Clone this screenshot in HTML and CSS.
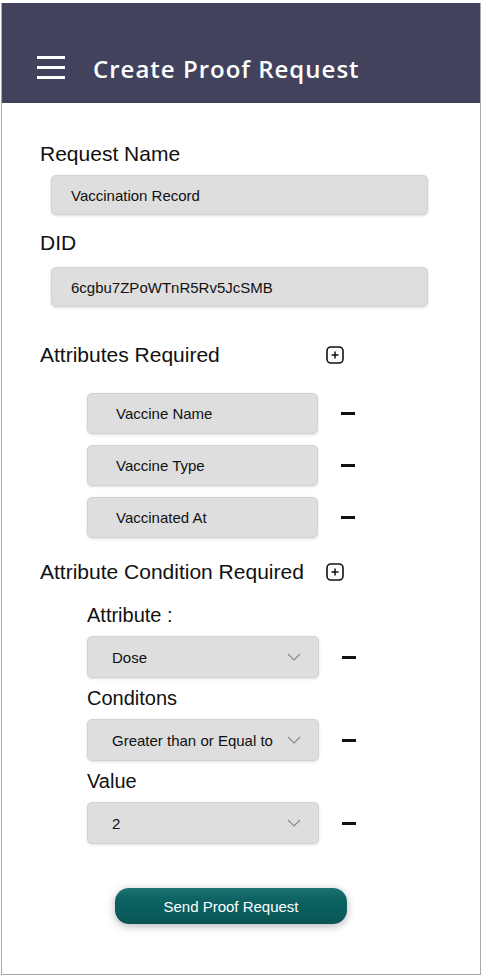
FILE: index.html
```html
<!DOCTYPE html>
<html lang="en">
<head>
    <meta charset="UTF-8">
    <meta name="viewport" content="width=device-width, initial-scale=1.0">
    <title>Create Proof Request</title>
    <link rel="stylesheet" href="styles.css">
</head>
<body>

    <div class="frame">
        <header class="topbar">
            <svg class="menu" width="28" height="24" viewBox="0 0 28 24">
                <rect x="0" y="0" width="28" height="3" fill="#fff"/>
                <rect x="0" y="10" width="28" height="3" fill="#fff"/>
                <rect x="0" y="20" width="28" height="3" fill="#fff"/>
            </svg>
            <h1>Create Proof Request</h1>
        </header>

        <main class="form">
            <div class="label label-name">Request Name</div>
            <div class="field field-wide">Vaccination Record</div>

            <div class="label label-did">DID</div>
            <div class="field field-wide">6cgbu7ZPoWTnR5Rv5JcSMB</div>

            <!-- attributes -->
            <div class="section-head head-attrs">
                <span class="label">Attributes Required</span>
                <svg class="add" width="18" height="18" viewBox="0 0 18 18">
                    <rect x="1" y="1" width="16" height="16" rx="4" fill="none" stroke="#111" stroke-width="1.6"/>
                    <path d="M9 5.5v7M5.5 9h7" stroke="#111" stroke-width="1.5"/>
                </svg>
            </div>
            <div class="rows">
                <div class="row">
                    <div class="field field-attr">Vaccine Name</div>
                    <span class="remove"></span>
                </div>
                <div class="row">
                    <div class="field field-attr">Vaccine Type</div>
                    <span class="remove"></span>
                </div>
                <div class="row">
                    <div class="field field-attr">Vaccinated At</div>
                    <span class="remove"></span>
                </div>
            </div>

            <!-- conditions -->
            <div class="section-head head-cond">
                <span class="label">Attribute Condition Required</span>
                <svg class="add" width="18" height="18" viewBox="0 0 18 18">
                    <rect x="1" y="1" width="16" height="16" rx="4" fill="none" stroke="#111" stroke-width="1.6"/>
                    <path d="M9 5.5v7M5.5 9h7" stroke="#111" stroke-width="1.5"/>
                </svg>
            </div>
            <div class="cond">
                <div class="sublabel">Attribute :</div>
                <div class="row">
                    <div class="field field-select"><span>Dose</span><svg class="chev" width="14" height="8" viewBox="0 0 14 8"><path d="M1 1l6 6 6-6" fill="none" stroke="#8a8a8a" stroke-width="1.2"/></svg></div>
                    <span class="remove"></span>
                </div>
                <div class="sublabel">Conditons</div>
                <div class="row">
                    <div class="field field-select"><span>Greater than or Equal to</span><svg class="chev" width="14" height="8" viewBox="0 0 14 8"><path d="M1 1l6 6 6-6" fill="none" stroke="#8a8a8a" stroke-width="1.2"/></svg></div>
                    <span class="remove"></span>
                </div>
                <div class="sublabel">Value</div>
                <div class="row">
                    <div class="field field-select"><span>2</span><svg class="chev" width="14" height="8" viewBox="0 0 14 8"><path d="M1 1l6 6 6-6" fill="none" stroke="#8a8a8a" stroke-width="1.2"/></svg></div>
                    <span class="remove"></span>
                </div>
            </div>

            <button class="send">Send Proof Request</button>
        </main>
    </div>

</body>
</html>
```

FILE: styles.css
```css
body {
    margin: 0;
    font-family: "Liberation Sans", Arial, sans-serif;
    color: #111;
    background: #fff;
}
.frame {
    margin: 3px 0 0 1px;
    width: 480px;
    height: 972px;
    box-sizing: border-box;
    border: 1px solid #a8a8a8;
    border-top: none;
}
.topbar {
    height: 100px;
    background-color: #43425d;
    display: flex;
    align-items: center;
    padding-left: 35px;
    padding-top: 30px;
    box-sizing: border-box;
}
.menu {
    display: block;
}
.topbar h1 {
    margin: 0 0 0 28px;
    font-family: "Open Sans", sans-serif;
    font-weight: 600;
    font-size: 24px;
    letter-spacing: 1px;
    color: #fff;
}
.form {
    padding: 39px 0 0 38px;
}
.label {
    font-size: 21px;
    line-height: 24px;
}
.label-did {
    margin-top: 16px;
}
.field {
    background-color: #dedede;
    border: 1px solid #d2d2d2;
    border-radius: 5px;
    box-shadow: 0 1px 3px rgba(0, 0, 0, 0.12);
    box-sizing: border-box;
    font-size: 15px;
    display: flex;
    align-items: center;
}
.field-wide {
    margin: 9px 0 0 11px;
    width: 377px;
    height: 40px;
    padding-left: 19px;
}
.label-did + .field-wide {
    margin-top: 12px;
}
.section-head {
    width: 304px;
    display: flex;
    justify-content: space-between;
    align-items: center;
}
.head-attrs {
    margin-top: 36px;
}
.head-cond {
    margin-top: 22px;
}
.add {
    display: block;
}
.rows {
    margin: 26px 0 0 47px;
    display: flex;
    flex-direction: column;
    gap: 11px;
}
.row {
    display: flex;
    align-items: center;
}
.field-attr {
    width: 231px;
    height: 41px;
    padding-left: 28px;
}
.remove {
    width: 14px;
    height: 3px;
    background: #111;
    margin-left: 23px;
}
.cond {
    margin: 19px 0 0 47px;
}
.sublabel {
    font-size: 20px;
    line-height: 24px;
    margin-bottom: 9px;
}
.row + .sublabel {
    margin-top: 8px;
}
.field-select {
    width: 232px;
    height: 42px;
    padding: 0 17px 0 24px;
    justify-content: space-between;
}
.send {
    display: block;
    margin: 44px 0 0 75px;
    width: 232px;
    height: 36px;
    border: none;
    border-radius: 14px;
    background: linear-gradient(#1f7272, #0d6262 30%, #0a5c5c 70%, #0b5353);
    box-shadow: 0 2px 8px rgba(0, 0, 0, 0.3);
    color: #fff;
    font-family: "Liberation Sans", Arial, sans-serif;
    font-size: 15px;
    cursor: pointer;
}
```
